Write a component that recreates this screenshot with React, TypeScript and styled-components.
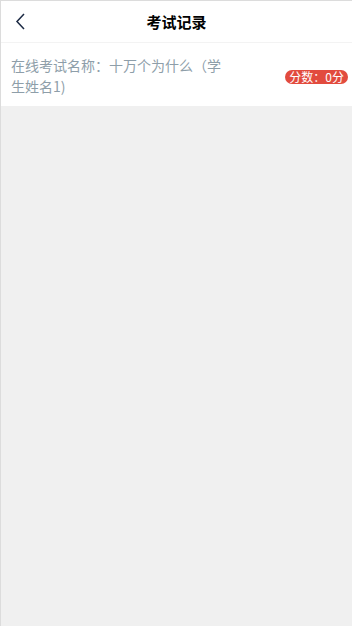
import React from "react";
import styled, { createGlobalStyle } from "styled-components";

const Global = createGlobalStyle`
  html, body { margin: 0; padding: 0; height: 100%; }
  body {
    font-family: "Noto Sans CJK SC", "Liberation Sans", sans-serif;
    background: #f0f0f0;
  }
  #root { min-height: 100%; }
`;

const Page = styled.div`
  box-sizing: border-box;
  min-height: 626px;
  background: #f0f0f0;
  border-top: 1px solid #dcdcdc;
  border-left: 1px solid #dcdcdc;
`;

const Header = styled.header`
  position: relative;
  height: 41px;
  background: #fff;
  border-bottom: 1px solid #f3f3f3;
  display: flex;
  align-items: center;
  justify-content: center;
`;

const BackButton = styled.button`
  position: absolute;
  left: 10px;
  top: 8px;
  width: 18px;
  height: 24px;
  padding: 0;
  border: 0;
  background: transparent;
  display: flex;
  align-items: center;
  justify-content: center;
`;

const Title = styled.h1`
  margin: 0;
  font-size: 15px;
  font-weight: 700;
  color: #000;
  line-height: 1;
`;

const Card = styled.div`
  background: #fff;
  display: flex;
  align-items: center;
  justify-content: space-between;
  padding: 12px 4px 9px 10px;
`;

const Name = styled.div`
  flex: 0 0 auto;
  width: 212px;
  font-size: 14px;
  line-height: 21px;
  color: #8e9ea9;
`;

const Badge = styled.span`
  display: inline-flex;
  align-items: center;
  height: 14px;
  padding: 0 4px;
  border-radius: 7px;
  background: #e24b3e;
  color: #fff;
  font-size: 12px;
  line-height: 14px;
  white-space: nowrap;
  margin-top: 2px;
`;

export default function App() {
  return (
    <>
      <Global />
      <Page>
        <Header>
          <BackButton aria-label="返回">
            <svg width="10" height="17" viewBox="0 0 10 17" fill="none">
              <path d="M9 1L2 8.5l7 7.5" stroke="#1c2a44" strokeWidth="1.5" />
            </svg>
          </BackButton>
          <Title>考试记录</Title>
        </Header>
        <Card>
          <Name>在线考试名称：十万个为什么（学生姓名1)</Name>
          <Badge>分数：0分</Badge>
        </Card>
      </Page>
    </>
  );
}
